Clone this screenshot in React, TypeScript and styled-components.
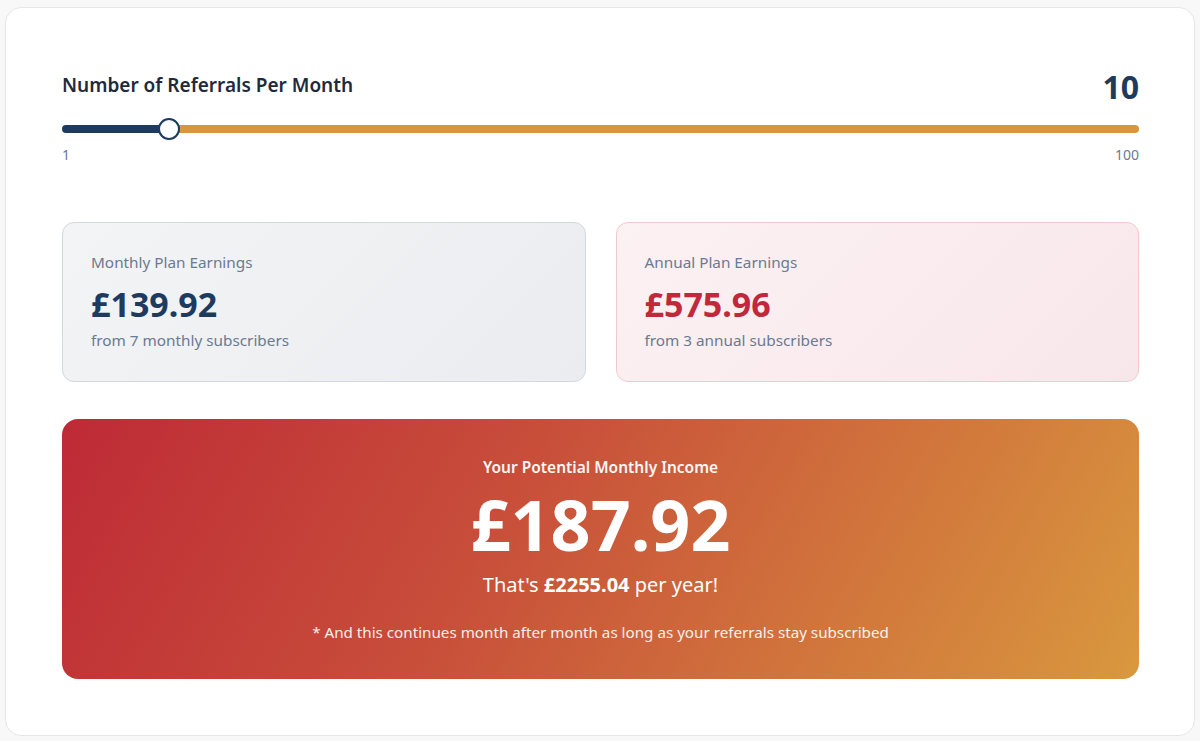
import React, { useState } from 'react'
import styled, { createGlobalStyle } from 'styled-components'

const GlobalStyle = createGlobalStyle`
  html, body {
    margin: 0;
    padding: 0;
    background: #f8f8f8;
    font-family: 'Noto Sans', 'Open Sans', sans-serif;
  }
  * { box-sizing: border-box; }
`

const SPage = styled.div`
  padding: 7px 5px 5px;
`

const SCard = styled.section`
  background: #ffffff;
  border: 1px solid #e6e6e6;
  border-radius: 16px;
  padding: 56px 55px 56px 56px;
`

const SHeader = styled.div`
  display: flex;
  align-items: center;
  justify-content: space-between;
  height: 42px;
`

const STitle = styled.h2`
  margin: 0;
  font: 600 19px/1.2 'Noto Sans', sans-serif;
  color: #1f2a3c;
`

const SCount = styled.span`
  font: 700 32px/1 'Noto Sans', sans-serif;
  color: #1e3a5f;
  position: relative;
  top: 2px;
`

const SRange = styled.input<{ $pct: number }>`
  -webkit-appearance: none;
  appearance: none;
  display: block;
  width: 100%;
  height: 24px;
  margin: 11px 0 0;
  background: transparent;
  cursor: pointer;

  &::-webkit-slider-runnable-track {
    height: 8px;
    border-radius: 4px;
    background: linear-gradient(
      to right,
      #1e3a5f 0,
      #1e3a5f calc(11px + (100% - 22px) * ${(p) => p.$pct}),
      #d9963e calc(11px + (100% - 22px) * ${(p) => p.$pct}),
      #d9963e 100%
    );
  }

  &::-webkit-slider-thumb {
    -webkit-appearance: none;
    appearance: none;
    width: 22px;
    height: 22px;
    margin-top: -7px;
    border-radius: 50%;
    background: #ffffff;
    border: 2px solid #1e3a5f;
  }
`

const SRangeLabels = styled.div`
  display: flex;
  justify-content: space-between;
  margin-top: 6px;
  font: 400 14px/1.2 'Noto Sans', sans-serif;
  color: #6b7a90;
`

const SPlans = styled.div`
  display: grid;
  grid-template-columns: 1fr 1fr;
  gap: 30px;
  margin-top: 58px;
`

const SPlan = styled.div<{ $variant: 'monthly' | 'annual' }>`
  border-radius: 12px;
  padding: 30px 28px 28px;
  height: 160px;
  border: 1px solid ${(p) => (p.$variant === 'monthly' ? '#d3d8de' : '#f1c9d0')};
  background: ${(p) =>
    p.$variant === 'monthly'
      ? 'linear-gradient(135deg, #f2f4f6 0%, #eaecef 100%)'
      : 'linear-gradient(135deg, #fcf1f3 0%, #f8e7ea 100%)'};
`

const SPlanLabel = styled.div`
  font: 400 15.3px/1.3 'Noto Sans', sans-serif;
  color: #6b7a90;
`

const SPlanAmount = styled.div<{ $variant: 'monthly' | 'annual' }>`
  margin-top: 10px;
  font: 700 34px/1.25 'Noto Sans', sans-serif;
  color: ${(p) => (p.$variant === 'monthly' ? '#1e3a5f' : '#c1283b')};
`

const SPlanSub = styled.div`
  margin-top: 6px;
  font: 400 15.3px/1.3 'Noto Sans', sans-serif;
  color: #6b7a90;
`

const STotal = styled.div`
  margin-top: 37px;
  height: 260px;
  border-radius: 16px;
  background: linear-gradient(120deg, #be2a36 0%, #c84e3a 40%, #d9983e 100%);
  color: #ffffff;
  text-align: center;
  padding-top: 38px;
`

const STotalLabel = styled.div`
  font: 600 15.5px/1.3 'Noto Sans', sans-serif;
  opacity: 0.95;
`

const STotalAmount = styled.div`
  margin-top: 5px;
  font: 700 70px/1.2 'Noto Sans', sans-serif;
`

const STotalYear = styled.div`
  margin-top: 6px;
  font: 400 20px/1.3 'Noto Sans', sans-serif;

  strong {
    font-weight: 700;
  }
`

const STotalNote = styled.div`
  margin-top: 25px;
  font: 400 15.2px/1.3 'Noto Sans', sans-serif;
  opacity: 0.9;
`

const MONTHLY_PRICE = 19.988571
const ANNUAL_PRICE = 191.9867

export default function App(): React.ReactElement {
  const [referrals, setReferrals] = useState(10)
  const monthlySubs = Math.round(referrals * 0.7)
  const annualSubs = referrals - monthlySubs
  const monthly = monthlySubs === 7 ? 139.92 : monthlySubs * MONTHLY_PRICE
  const annual = annualSubs === 3 ? 575.96 : annualSubs * ANNUAL_PRICE
  const perMonth = Math.round((monthly + annual / 12) * 100) / 100
  const pct = (referrals - 1) / 99

  return (
    <>
      <GlobalStyle />
      <SPage>
        <SCard>
          <SHeader>
            <STitle>Number of Referrals Per Month</STitle>
            <SCount>{referrals}</SCount>
          </SHeader>
          <SRange
            type="range"
            min={1}
            max={100}
            value={referrals}
            $pct={pct}
            onChange={(e) => setReferrals(Number(e.target.value))}
          />
          <SRangeLabels>
            <span>1</span>
            <span>100</span>
          </SRangeLabels>

          <SPlans>
            <SPlan $variant="monthly">
              <SPlanLabel>Monthly Plan Earnings</SPlanLabel>
              <SPlanAmount $variant="monthly">£{monthly.toFixed(2)}</SPlanAmount>
              <SPlanSub>from {monthlySubs} monthly subscribers</SPlanSub>
            </SPlan>
            <SPlan $variant="annual">
              <SPlanLabel>Annual Plan Earnings</SPlanLabel>
              <SPlanAmount $variant="annual">£{annual.toFixed(2)}</SPlanAmount>
              <SPlanSub>from {annualSubs} annual subscribers</SPlanSub>
            </SPlan>
          </SPlans>

          <STotal>
            <STotalLabel>Your Potential Monthly Income</STotalLabel>
            <STotalAmount>£{perMonth.toFixed(2)}</STotalAmount>
            <STotalYear>
              That's <strong>£{(perMonth * 12).toFixed(2)}</strong> per year!
            </STotalYear>
            <STotalNote>* And this continues month after month as long as your referrals stay subscribed</STotalNote>
          </STotal>
        </SCard>
      </SPage>
    </>
  )
}
